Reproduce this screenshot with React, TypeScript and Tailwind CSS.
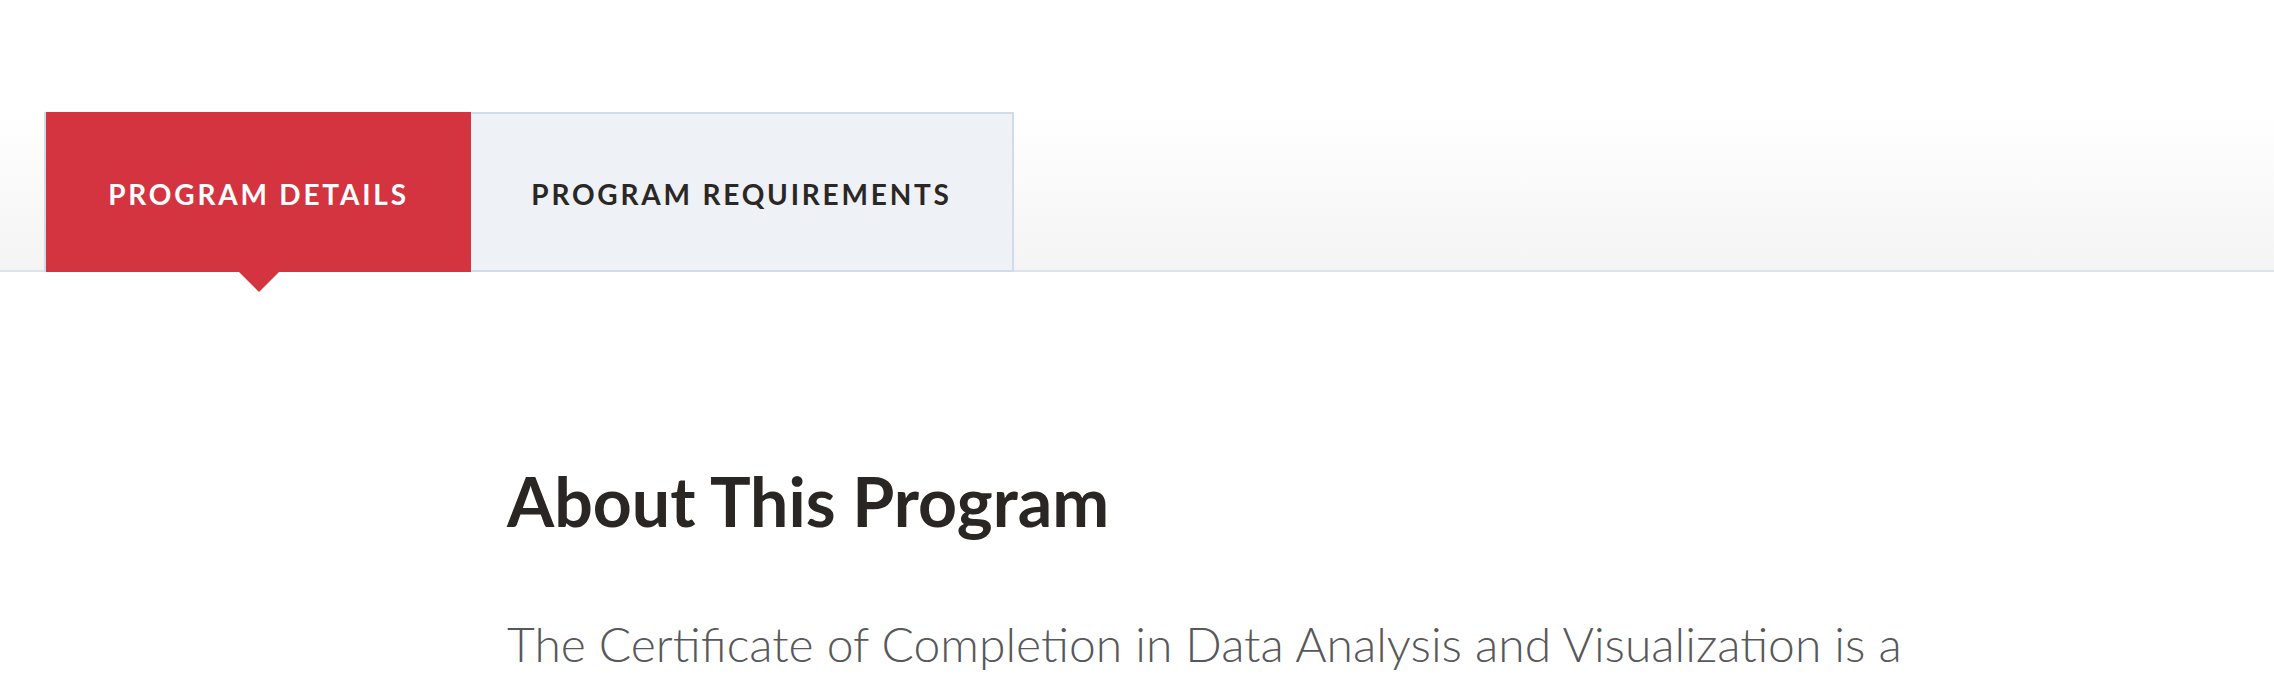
import React from 'react';

const tabs = [
  { label: 'PROGRAM DETAILS', active: true },
  { label: 'PROGRAM REQUIREMENTS', active: false },
];

const App = () => {
  return (
    <div className="min-h-[688px] overflow-hidden bg-white font-['Lato','Open_Sans',sans-serif]">
      <div className="h-[112px]" />

      {/* tab band */}
      <div className="h-[160px] border-b-2 border-[#dbe4ec] bg-gradient-to-b from-white to-[#f4f4f4]">
        <div className="flex h-[160px] pl-[44px]">
          <div className="flex border-l-2 border-[#d0dce8]">
            {tabs.map((tab) =>
              tab.active ? (
                <div
                  key={tab.label}
                  className="relative z-10 flex h-[160px] w-[425px] items-center justify-center bg-[#d4343f] pt-[4px]"
                >
                  <span className="text-[28px] font-bold tracking-[0.1em] text-white">{tab.label}</span>
                  <span className="absolute left-1/2 top-full -translate-x-1/2 border-x-[20px] border-t-[20px] border-x-transparent border-t-[#d4343f]" />
                </div>
              ) : (
                <div
                  key={tab.label}
                  className="relative z-10 flex h-[160px] w-[543px] items-center justify-center border-2 border-l-0 border-[#d0dce8] bg-[#eef1f6] pt-[4px]"
                >
                  <span className="text-[28px] font-bold tracking-[0.1em] text-[#2a2725]">{tab.label}</span>
                </div>
              )
            )}
          </div>
        </div>
      </div>

      {/* content */}
      <div className="pl-[507px]">
        <h1 className="mt-[188px] text-[68px] font-bold leading-[1.2] text-[#2a2623]">About This Program</h1>
        <p className="mt-[64px] max-w-[1470px] text-[48px] font-light leading-[1.6] text-[#58585a]">
          The Certificate of Completion in Data Analysis and Visualization is a non-credit program designed for
          professionals who want to build practical skills in working with data.
        </p>
      </div>
    </div>
  );
};

export default App;
